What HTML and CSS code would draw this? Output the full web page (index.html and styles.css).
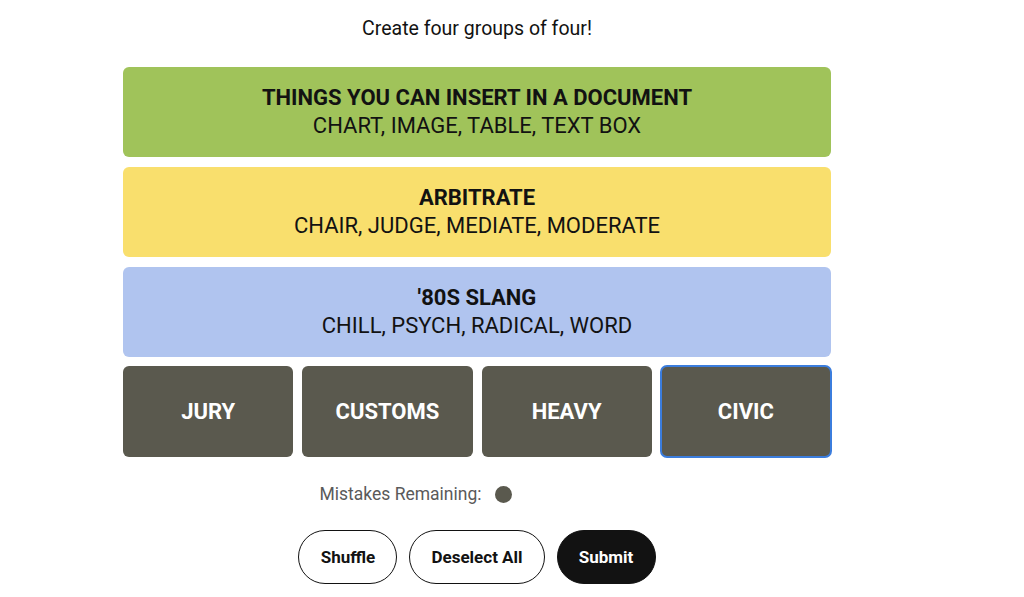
FILE: index.html
```html
<!DOCTYPE html>
<html lang="en">
<head>
  <meta charset="UTF-8">
  <meta name="viewport" content="width=device-width, initial-scale=1.0">
  <title>Connections</title>
  <link rel="stylesheet" href="styles.css">
</head>
<body>
  <main class="game">
    <p class="prompt">Create four groups of four!</p>

    <div class="board">
      <div class="group group-green">
        <h3 class="group-title">THINGS YOU CAN INSERT IN A DOCUMENT</h3>
        <div class="group-words">CHART, IMAGE, TABLE, TEXT BOX</div>
      </div>
      <div class="group group-yellow">
        <h3 class="group-title">ARBITRATE</h3>
        <div class="group-words">CHAIR, JUDGE, MEDIATE, MODERATE</div>
      </div>
      <div class="group group-blue">
        <h3 class="group-title">'80S SLANG</h3>
        <div class="group-words">CHILL, PSYCH, RADICAL, WORD</div>
      </div>
      <div class="tiles">
        <button class="tile">JURY</button>
        <button class="tile">CUSTOMS</button>
        <button class="tile">HEAVY</button>
        <button class="tile tile-focus">CIVIC</button>
      </div>
    </div>

    <div class="mistakes">
      Mistakes Remaining:
      <div class="dots">
        <span class="dot"></span>
        <span class="dot dot-used"></span>
        <span class="dot dot-used"></span>
        <span class="dot dot-used"></span>
      </div>
    </div>

    <div class="actions">
      <button class="pill">Shuffle</button>
      <button class="pill">Deselect All</button>
      <button class="pill pill-dark">Submit</button>
    </div>
  </main>
</body>
</html>
```

FILE: styles.css
```css
body {
  margin: 0;
  background: #ffffff;
  font-family: Roboto, "Liberation Sans", sans-serif;
  color: #121212;
}

.game {
  width: 954px;
  display: flex;
  flex-direction: column;
  align-items: center;
}

.prompt {
  margin: 18px 0 0;
  font-size: 19.5px;
  line-height: 22px;
}

.board {
  width: 708px;
  margin-top: 27px;
  display: flex;
  flex-direction: column;
  gap: 10px;
}

.group {
  height: 90px;
  border-radius: 6px;
  display: flex;
  flex-direction: column;
  justify-content: center;
  align-items: center;
  text-transform: uppercase;
}

.group-title {
  margin: 0;
  font-size: 22px;
  font-weight: 700;
  line-height: 28px;
}

.group-words {
  font-size: 22px;
  line-height: 28px;
}

.group-green { background: #a0c35a; }
.group-yellow { background: #f9df6d; }
.group-blue { background: #b0c4ef; }

.tiles {
  display: grid;
  grid-template-columns: repeat(4, 1fr);
  gap: 9px;
  margin-top: -1px;
}

.tile {
  height: 91px;
  border: none;
  border-radius: 6px;
  background: #5a594e;
  color: #ffffff;
  font-family: inherit;
  font-size: 22px;
  font-weight: 700;
  cursor: pointer;
}

.tile-focus {
  outline: 2px solid #3b7ddd;
  outline-offset: -1px;
}

.mistakes {
  margin-top: 27px;
  display: flex;
  align-items: center;
  gap: 13px;
  font-size: 17.5px;
  color: #5a5a5a;
}

.dots {
  display: flex;
  gap: 24px;
}

.dot {
  width: 17px;
  height: 17px;
  border-radius: 50%;
  background: #5a594e;
}

.dot-used {
  visibility: hidden;
}

.actions {
  margin-top: 26px;
  display: flex;
  gap: 12px;
}

.pill {
  height: 54px;
  min-width: 99px;
  padding: 0 21px;
  border: 1px solid #121212;
  border-radius: 27px;
  background: #ffffff;
  color: #121212;
  font-family: inherit;
  font-size: 17px;
  font-weight: 700;
  cursor: pointer;
}

.pill-dark {
  background: #121212;
  color: #ffffff;
}
```
